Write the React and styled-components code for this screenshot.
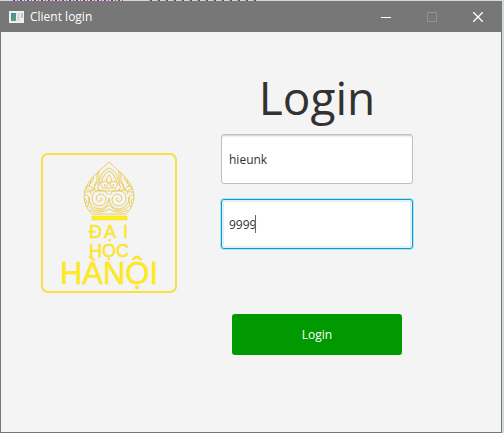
import React, { useState } from "react";
import styled, { createGlobalStyle } from "styled-components";

const GlobalStyle = createGlobalStyle`
  *, *::before, *::after { box-sizing: border-box; }
  body { margin: 0; background: #d5d8d8; }
  button, input { font: inherit; }
`;

const Desktop = styled.div`
  display: flex;
  flex-direction: column;
  min-height: 100vh;
  padding-right: 2px;
  font-family: "Open Sans", "Noto Sans", sans-serif;
  font-size: 12px;
  color: #323232;
`;

const BackdropStrip = styled.div`
  display: flex;
  gap: 24px;
  height: 1px;
  padding-left: 13px;
`;

const BackdropText = styled.div`
  width: 112px;
  background: ${(p) =>
    p.$tone === "keyword"
      ? "repeating-linear-gradient(90deg, #8a2b8a 0 2px, #d5d8d8 2px 4px, #a04da0 4px 5px, #d5d8d8 5px 7px)"
      : "repeating-linear-gradient(90deg, #c58a3c 0 2px, #26406e 2px 3px, #d5d8d8 3px 8px)"};
`;

const Window = styled.main`
  flex: 1;
  display: flex;
  flex-direction: column;
  border: 1px solid #777;
  background: #f4f4f4;
`;

const TitleBar = styled.header`
  display: flex;
  align-items: center;
  height: 30px;
  padding-left: 8px;
  background: #777;
  color: #fff;
`;

const WindowTitle = styled.span`
  flex: 1;
  margin-left: 6px;
  line-height: 16px;
`;

const CaptionButton = styled.button`
  display: grid;
  place-items: center;
  width: 46px;
  height: 30px;
  padding: 0;
  border: 0;
  background: transparent;
  color: ${(p) => (p.disabled ? "#929292" : "#fff")};
`;

const Content = styled.div`
  flex: 1;
  display: flex;
  align-items: flex-start;
  gap: 44px;
  padding: 33px 88px 40px 40px;
`;

const Logo = styled.svg`
  flex: none;
  width: 136px;
  height: 140px;
  margin-top: 88px;
  font-family: "Liberation Sans", Arial, sans-serif;
`;

const LoginForm = styled.form`
  flex: 1;
  min-width: 0;
  display: flex;
  flex-direction: column;
`;

const Heading = styled.h1`
  margin: 0 0 5px;
  font-size: 46px;
  line-height: 64px;
  font-weight: 400;
  text-align: center;
`;

const Field = styled.label`
  position: relative;
  display: block;
  margin-bottom: 15px;
`;

const TextInput = styled.input`
  display: block;
  width: 100%;
  height: 50px;
  padding: 0 7px;
  border: 1px solid ${(p) => (p.$active ? "#039ed3" : "#c0c0c0")};
  border-radius: 3px;
  outline: 0;
  background: #fff;
  color: #323232;
  box-shadow: ${(p) =>
    p.$active
      ? "0 0 0 1px #b9e0ee, inset 0 0 0 2px #e2f1f9"
      : "inset 0 2px 2px -1px #ccc"};
`;

const Caret = styled.span`
  position: absolute;
  top: 16px;
  width: 1px;
  height: 18px;
  background: #666;
`;

const SubmitButton = styled.button`
  height: 41px;
  margin: 50px 11px 0;
  border: 0;
  border-radius: 3px;
  background: #090;
  color: #fff;
`;

function AppIcon() {
  return (
    <svg width="15" height="13" viewBox="0 0 15 13" aria-hidden="true">
      <defs>
        <linearGradient id="screen" x2="1" y2="1">
          <stop stopColor="#4c83a5" />
          <stop offset="1" stopColor="#56a577" />
        </linearGradient>
      </defs>
      <path d="M0 0h15v12H0z" fill="#f0f0f0" />
      <path d="M2 2h5v8H2z" fill="url(#screen)" />
      <path d="M8 2h3v8H8z" fill="#d8dada" />
      <path d="M12 2h2v5h-2z" fill="#a9cfc0" />
    </svg>
  );
}

function OrnamentHalf() {
  return (
    <>
      <path d="M68 9L58 18Q43 31 43 43Q43 53 51 61H68" />
      <path d="M58 18V31M56 20V28Q53 31 53 36M53 24Q52 29 48 32M50 27Q50 32 45 35" />
      <path d="M68 15Q61 18 60 24Q59 28 55 31" />
      <path d="M68 18Q63 20 62 25Q61 29 57 32" />
      <path d="M68 22Q64 25 66 29L68 30" />
      <path d="M68 35H62Q58 32 61 29Q65 27 67 30Q67 34 64 33Q62 32 64 31" />
      <path d="M58 31Q55 35 59 38M55 31Q51 36 56 38H68" />
      <path d="M47 33Q52 33 52 38M45 36Q50 36 50 41M54 36Q48 40 44 39" />
      <path d="M67 42Q65 37 59 37Q51 38 51 45Q51 53 59 53Q65 52 65 46Q64 41 59 41Q55 42 55 46Q57 50 60 48Q62 45 59 45" />
      <path d="M68 45Q67 55 59 56Q48 55 48 44" />
      <path d="M43 42Q48 41 48 47Q48 53 46 54M44 46Q46 46 46 51" />
      <path d="M48 53Q54 59 62 57L68 52M49 57Q58 62 68 56" />
    </>
  );
}

function Ornament() {
  return (
    <g fill="none" stroke="#e8ca4c" strokeWidth="0.9">
      <OrnamentHalf />
      <g transform="translate(136 0) scale(-1 1)">
        <OrnamentHalf />
      </g>
    </g>
  );
}

function UniversityLogo() {
  return (
    <Logo viewBox="0 0 136 140" role="img" aria-label="Đại học Hà Nội">
      <rect x="1" y="1" width="134" height="138" rx="6" fill="none" stroke="#ead768" strokeWidth="2" />
      <rect x="1" y="1" width="134" height="138" rx="6" fill="none" stroke="#ffec22" strokeWidth="1" />
      <Ornament />
      <path d="M51 63h35v4H51z" fill="#ffef19" stroke="#eadb4b" strokeWidth="0.5" />
      <text fill="#ffed19" stroke="#f5df3b" strokeWidth="0.5" fontSize="18">
        <tspan x="48" y="85">Đ</tspan>
        <tspan x="63">Ạ</tspan>
        <tspan x="82">I</tspan>
        <tspan x="68" y="104" textAnchor="middle">HỌC</tspan>
        <tspan x="68" y="131" fontSize="31" textAnchor="middle">HÀNỘI</tspan>
      </text>
    </Logo>
  );
}

export default function App() {
  const [user, setUser] = useState("hieunk");
  const [code, setCode] = useState("9999");

  return (
    <>
      <GlobalStyle />
      <Desktop>
        <BackdropStrip>
          <BackdropText $tone="keyword" />
          <BackdropText $tone="value" />
        </BackdropStrip>
        <Window>
          <TitleBar>
            <AppIcon />
            <WindowTitle>Client login</WindowTitle>
            <CaptionButton aria-label="Minimize">
              <svg width="10" height="10" viewBox="0 0 10 10">
                <path d="M0 5.5h10" stroke="currentColor" />
              </svg>
            </CaptionButton>
            <CaptionButton aria-label="Maximize" disabled>
              <svg width="10" height="10" viewBox="0 0 10 10">
                <path d="M.5.5h9v9h-9z" fill="none" stroke="currentColor" />
              </svg>
            </CaptionButton>
            <CaptionButton aria-label="Close">
              <svg width="10" height="10" viewBox="0 0 10 10">
                <path d="M0 0l10 10M10 0L0 10" stroke="currentColor" strokeWidth="1.3" />
              </svg>
            </CaptionButton>
          </TitleBar>
          <Content>
            <UniversityLogo />
            <LoginForm onSubmit={(e) => e.preventDefault()}>
              <Heading>Login</Heading>
              <Field>
                <TextInput
                  aria-label="Username"
                  value={user}
                  onChange={(e) => setUser(e.target.value)}
                />
              </Field>
              <Field>
                <TextInput
                  $active
                  aria-label="Password"
                  value={code}
                  onChange={(e) => setCode(e.target.value)}
                />
                <Caret style={{ left: `calc(7px + ${code.length}ch)` }} />
              </Field>
              <SubmitButton type="submit">Login</SubmitButton>
            </LoginForm>
          </Content>
        </Window>
      </Desktop>
    </>
  );
}
